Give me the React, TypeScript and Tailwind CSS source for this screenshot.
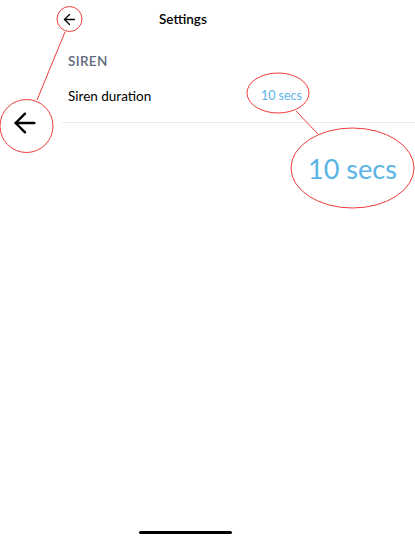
import { ArrowLeft } from 'lucide-react'

export default function App() {
  return (
    <div
      className="relative h-[539px] w-[415px] overflow-hidden bg-white text-black"
      style={{ fontFamily: 'Lato, "Noto Sans", sans-serif' }}
    >
      {/* header */}
      <div className="flex h-[39px] items-center pl-[61px]">
        <ArrowLeft size={17} strokeWidth={1.8} className="text-black" />
        <div className="ml-[81px] text-[13.5px] font-semibold">Settings</div>
      </div>

      {/* section */}
      <div className="pl-[68px]">
        <div className="mt-[12px] text-[13.5px] font-semibold tracking-wide text-[#5f6b7e]">SIREN</div>
        <div className="flex h-[40px] items-center justify-between pr-[113px] pt-[10px]">
          <span className="text-[13.5px]">Siren duration</span>
          <span className="text-[12.5px] text-[#5ab4e8]">10 secs</span>
        </div>
      </div>
      <div className="ml-[62px] mt-[11px] h-px bg-[#ececec]" />

      {/* callout annotations */}
      <svg className="pointer-events-none absolute inset-0" width="415" height="539">
        <circle cx="69.5" cy="19" r="12.5" fill="none" stroke="#ee3b3b" strokeWidth="1" />
        <line x1="65" y1="32" x2="37" y2="100" stroke="#ee3b3b" strokeWidth="1" />
        <circle cx="26.5" cy="126" r="26.5" fill="white" stroke="#ee3b3b" strokeWidth="1" />
        <ellipse cx="278" cy="93" rx="31" ry="20" fill="none" stroke="#ee3b3b" strokeWidth="1" />
        <line x1="296" y1="111" x2="318" y2="134" stroke="#ee3b3b" strokeWidth="1" />
        <ellipse cx="352.5" cy="168" rx="61.5" ry="40" fill="white" stroke="#ee3b3b" strokeWidth="1" />
      </svg>
      <div className="absolute left-[9px] top-[107px] flex h-[32px] w-[32px] items-center justify-center">
        <ArrowLeft size={32} strokeWidth={1.8} className="text-black" />
      </div>
      <div className="absolute left-[291px] top-[151px] w-[123px] text-center text-[27px] leading-[36px] text-[#5ab4e8]">
        10 secs
      </div>

      {/* home indicator */}
      <div className="absolute bottom-[5px] left-[139px] h-[3px] w-[93px] rounded-full bg-black" />
    </div>
  )
}
